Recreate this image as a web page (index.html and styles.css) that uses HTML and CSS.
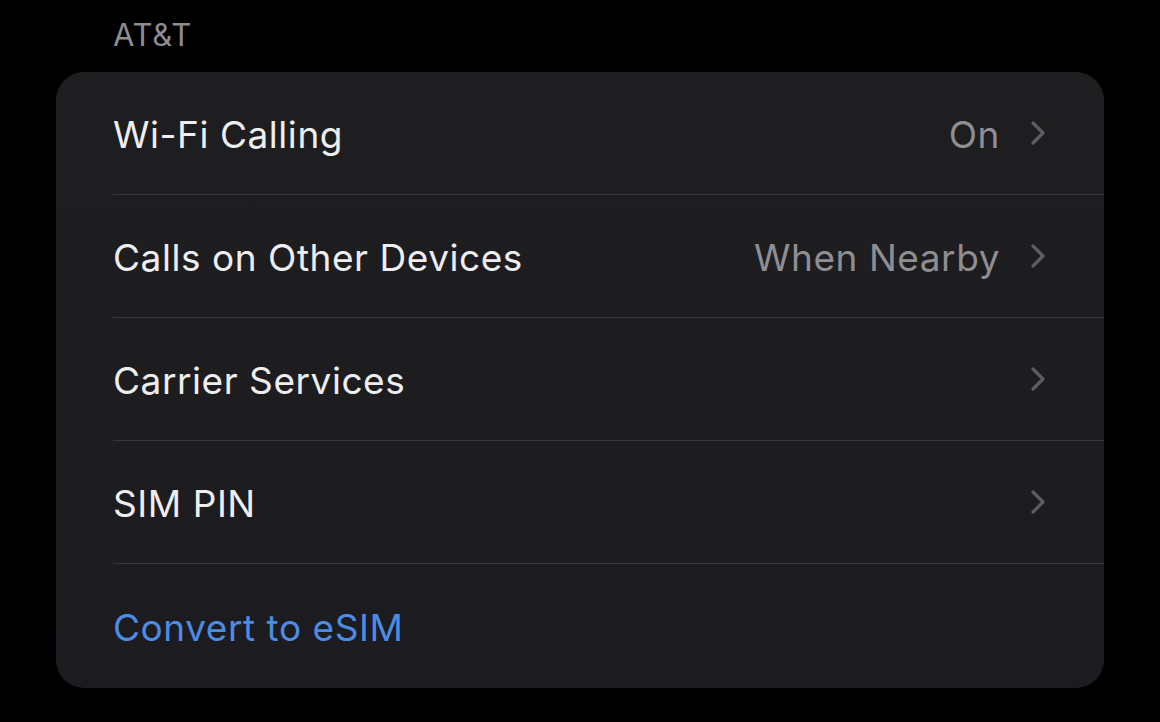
FILE: index.html
```html
<!DOCTYPE html>
<html>
<head>
<meta charset="utf-8">
<link rel="stylesheet" href="styles.css">
</head>
<body>
<div class="page">
  <div class="section-title">AT&amp;T</div>
  <div class="card">
    <div class="row">
      <span class="label">Wi-Fi Calling</span>
      <span class="value">On</span>
      <svg class="chev" viewBox="0 0 16 26"><path d="M3 3 L13 13 L3 23" fill="none" stroke="currentColor" stroke-width="3.2" stroke-linecap="round" stroke-linejoin="round"/></svg>
    </div>
    <div class="row">
      <span class="label">Calls on Other Devices</span>
      <span class="value">When Nearby</span>
      <svg class="chev" viewBox="0 0 16 26"><path d="M3 3 L13 13 L3 23" fill="none" stroke="currentColor" stroke-width="3.2" stroke-linecap="round" stroke-linejoin="round"/></svg>
    </div>
    <div class="row">
      <span class="label">Carrier Services</span>
      <span class="value"></span>
      <svg class="chev" viewBox="0 0 16 26"><path d="M3 3 L13 13 L3 23" fill="none" stroke="currentColor" stroke-width="3.2" stroke-linecap="round" stroke-linejoin="round"/></svg>
    </div>
    <div class="row">
      <span class="label">SIM PIN</span>
      <span class="value"></span>
      <svg class="chev" viewBox="0 0 16 26"><path d="M3 3 L13 13 L3 23" fill="none" stroke="currentColor" stroke-width="3.2" stroke-linecap="round" stroke-linejoin="round"/></svg>
    </div>
    <div class="row last">
      <span class="label link">Convert to eSIM</span>
    </div>
  </div>
</div>
</body>
</html>
```

FILE: styles.css
```css
html, body {
  margin: 0;
  padding: 0;
  background: #000;
  width: 1160px;
  height: 722px;
  overflow: hidden;
  font-family: "Inter", "Liberation Sans", sans-serif;
}
.page {
  padding: 0 56px;
}
.section-title {
  color: #8d8d92;
  font-size: 31px;
  letter-spacing: 0.8px;
  height: 72px;
  line-height: 72px;
  padding-left: 57px;
  box-sizing: border-box;
  margin-top: -1px;
  margin-bottom: 1px;
}
.card {
  background: linear-gradient(180deg, #1e1e20 0%, #1c1b1f 100%);
  border-radius: 28px;
  overflow: hidden;
  padding-left: 57px;
}
.row {
  display: flex;
  align-items: center;
  height: 123px;
  border-bottom: 1.5px solid #38383b;
  box-sizing: border-box;
}
.row.last {
  border-bottom: none;
  height: 124px;
}
.label {
  color: #eeeef0;
  font-size: 37px;
  flex: 1;
  letter-spacing: 0.55px;
  padding-top: 2px;
}
.label.link {
  color: #4c8ce4;
}
.value {
  color: #8e8e93;
  font-size: 37px;
  letter-spacing: 0.55px;
  padding-top: 2px;
}
.chev {
  width: 16px;
  height: 26px;
  color: #5c5c61;
  margin-left: 30px;
  margin-right: 58px;
}
```
